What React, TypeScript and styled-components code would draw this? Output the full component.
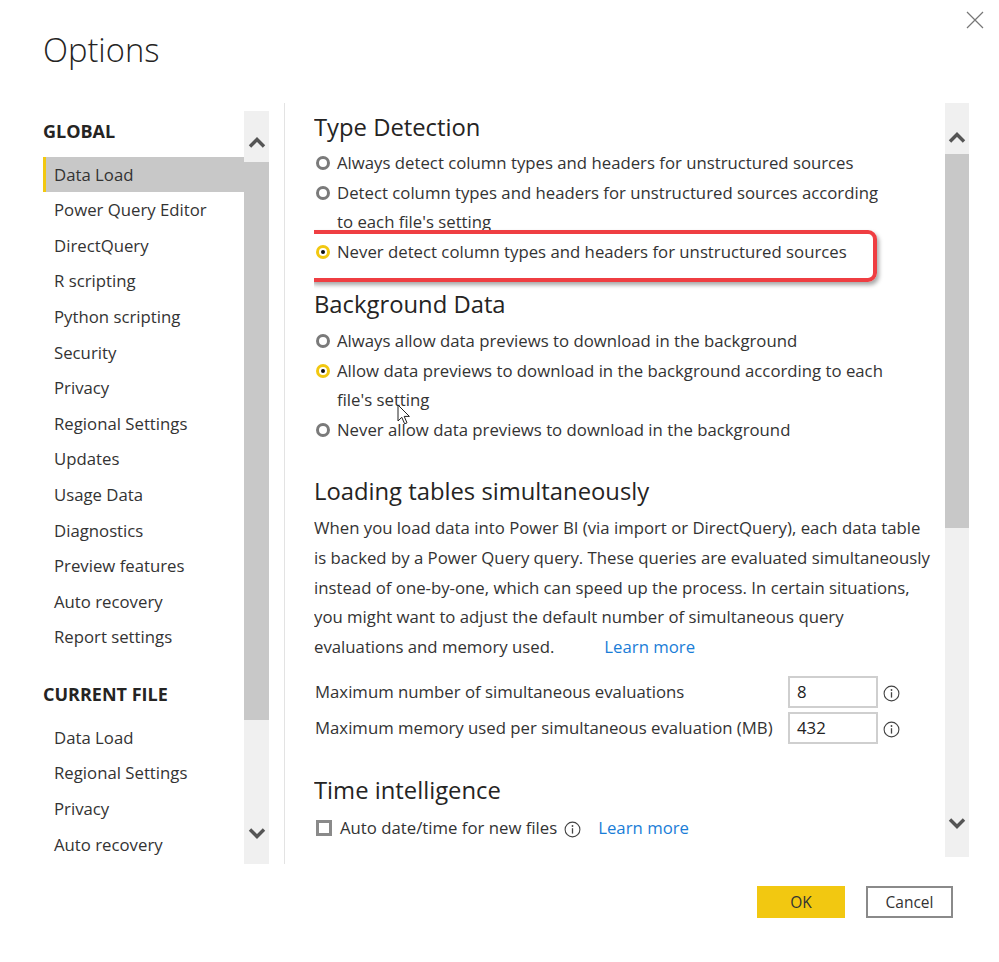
import React from "react";
import styled, { createGlobalStyle } from "styled-components";

const Global = createGlobalStyle`
  html, body { margin: 0; padding: 0; background: #fff; }
  body { font-family: "Open Sans", "Noto Sans", sans-serif; color: #333; }
  * { box-sizing: border-box; }
`;

const FONT_BODY = "16.75px";

const Dialog = styled.div`
  width: 999px;
  height: 962px;
  display: flex;
  flex-direction: column;
  background: #fff;
  position: relative;
  overflow: hidden;
`;

const Header = styled.header`
  height: 103px;
  display: flex;
  justify-content: space-between;
  align-items: flex-start;
  padding-left: 43px;
`;

const Title = styled.h1`
  margin: 28px 0 0;
  font-size: 32.7px;
  font-weight: 300;
  line-height: 44px;
  color: #252423;
`;

const CloseButton = styled.button`
  margin: 11px 15px 0 0;
  width: 18px;
  height: 18px;
  padding: 0;
  border: none;
  background: transparent;
  display: flex;
  align-items: center;
  justify-content: center;
`;

const Body = styled.div`
  height: 761px;
  display: flex;
  flex-direction: row;
`;

const Sidebar = styled.nav`
  margin-left: 43px;
  padding-top: 8px;
  display: flex;
  flex-direction: row;
`;

const NavList = styled.div`
  width: 201px;
  display: flex;
  flex-direction: column;
`;

const NavHeading = styled.div<{ $first?: boolean }>`
  font-size: 18px;
  font-weight: 700;
  line-height: 40px;
  margin-top: ${(p) => (p.$first ? "0" : "19.25px")};
  margin-bottom: 5.5px;
  color: #252423;
  white-space: nowrap;
`;

const NavItem = styled.div<{ $active?: boolean }>`
  height: 35.62px;
  line-height: 35.62px;
  font-size: ${FONT_BODY};
  padding-left: 8px;
  border-left: 3px solid ${(p) => (p.$active ? "#f2c811" : "transparent")};
  background: ${(p) => (p.$active ? "#c8c8c8" : "transparent")};
  color: #333;
  white-space: nowrap;
`;

const ScrollBar = styled.div<{ $w: number; $h?: number }>`
  width: ${(p) => p.$w}px;
  height: ${(p) => (p.$h ? `${p.$h}px` : "auto")};
  background: #f0f0f0;
  display: flex;
  flex-direction: column;
`;

const ArrowCell = styled.div<{ $padTop?: number; $padBottom?: number }>`
  height: 51px;
  display: flex;
  align-items: center;
  justify-content: center;
  padding-top: ${(p) => p.$padTop ?? 0}px;
  padding-bottom: ${(p) => p.$padBottom ?? 0}px;
  flex-shrink: 0;
`;

const Thumb = styled.div<{ $h: number }>`
  height: ${(p) => p.$h}px;
  background: #c8c8c8;
  flex-shrink: 0;
`;

const Track = styled.div`
  flex: 1;
`;

const Divider = styled.div`
  margin-left: 15px;
  width: 1px;
  background: #e3e3e3;
`;

const ContentPane = styled.main`
  margin-left: 29px;
  width: 631px;
  height: 754px;
  overflow: hidden;
  display: flex;
  flex-direction: column;
`;

const SectionTitle = styled.h2<{ $mt: number; $mb: number }>`
  margin: ${(p) => p.$mt}px 0 ${(p) => p.$mb}px;
  font-size: 23.8px;
  font-weight: 400;
  line-height: 36px;
  color: #252423;
  white-space: nowrap;
`;

const OptionRow = styled.div`
  position: relative;
  display: flex;
  align-items: flex-start;
  font-size: ${FONT_BODY};
  line-height: 29.6px;
  color: #333;
  white-space: nowrap;
`;

const Radio = styled.span<{ $checked?: boolean }>`
  flex-shrink: 0;
  width: 14px;
  height: 14px;
  margin: 7.8px 7px 0 2px;
  border-radius: 50%;
  border: 3px solid ${(p) => (p.$checked ? "#f2c811" : "#7a7a7a")};
  display: flex;
  align-items: center;
  justify-content: center;
  &::after {
    content: "";
    width: 4px;
    height: 4px;
    border-radius: 50%;
    background: ${(p) => (p.$checked ? "#111" : "transparent")};
  }
`;

const Highlight = styled.div`
  position: absolute;
  top: -7px;
  bottom: -15px;
  left: -8px;
  right: 68px;
  border: 4px solid #ef3e42;
  border-radius: 9px;
  box-shadow: 2px 3px 4px rgba(0, 0, 0, 0.35);
  pointer-events: none;
`;

const Paragraph = styled.p`
  margin: 0;
  font-size: ${FONT_BODY};
  line-height: 29.75px;
  color: #333;
  white-space: nowrap;
`;

const Link = styled.a<{ $ml?: number }>`
  color: #1a7dd7;
  text-decoration: none;
  margin-left: ${(p) => p.$ml ?? 0}px;
`;

const SettingRows = styled.div`
  margin-top: 14px;
  display: flex;
  flex-direction: column;
  gap: 4px;
`;

const SettingRow = styled.div`
  display: flex;
  align-items: center;
  height: 32px;
`;

const SettingLabel = styled.span`
  width: 474px;
  padding-left: 1px;
  font-size: ${FONT_BODY};
  color: #333;
  white-space: nowrap;
`;

const NumberInput = styled.div`
  width: 90px;
  height: 32px;
  border: 2px solid #cfcfcf;
  padding-left: 7px;
  font-size: ${FONT_BODY};
  line-height: 28px;
  color: #222;
`;

const InfoWrap = styled.span<{ $ml: number; $mt?: number }>`
  display: inline-flex;
  margin-left: ${(p) => p.$ml}px;
  margin-top: ${(p) => p.$mt ?? 0}px;
`;

const CheckRow = styled.div`
  display: flex;
  align-items: center;
  height: 30px;
  font-size: ${FONT_BODY};
  color: #333;
  white-space: nowrap;
`;

const CheckBox = styled.span`
  width: 16px;
  height: 16px;
  margin: 0 8px 0 2px;
  border: 3px solid #8a8a8a;
  flex-shrink: 0;
`;

const Footer = styled.footer`
  margin-top: 22px;
  padding-right: 46px;
  display: flex;
  justify-content: flex-end;
  gap: 21px;
`;

const Button = styled.button<{ $primary?: boolean }>`
  width: ${(p) => (p.$primary ? 88 : 87)}px;
  height: 32px;
  font-family: inherit;
  font-size: 15.5px;
  color: #333;
  background: ${(p) => (p.$primary ? "#f2c811" : "#fff")};
  border: ${(p) => (p.$primary ? "none" : "2px solid #8a8a8a")};
  padding: 0;
`;

const Cursor = styled.svg`
  position: absolute;
  left: 397px;
  top: 404px;
`;

const Chevron = ({ up }: { up?: boolean }) => (
  <svg width="18" height="11" viewBox="0 0 18 11">
    <path
      d={up ? "M2 9.5 L9 2.5 L16 9.5" : "M2 1.5 L9 8.5 L16 1.5"}
      fill="none"
      stroke="#555"
      strokeWidth="3.4"
    />
  </svg>
);

const Info = () => (
  <svg width="17" height="17" viewBox="0 0 17 17">
    <circle cx="8.5" cy="8.5" r="7.4" fill="none" stroke="#444" strokeWidth="1.1" />
    <circle cx="8.5" cy="5" r="0.9" fill="#444" />
    <path d="M8.5 7.2 V12.6" stroke="#444" strokeWidth="1.3" />
  </svg>
);

const globalItems = [
  "Data Load",
  "Power Query Editor",
  "DirectQuery",
  "R scripting",
  "Python scripting",
  "Security",
  "Privacy",
  "Regional Settings",
  "Updates",
  "Usage Data",
  "Diagnostics",
  "Preview features",
  "Auto recovery",
  "Report settings",
];

const fileItems = ["Data Load", "Regional Settings", "Privacy", "Auto recovery"];

export default function App() {
  return (
    <Dialog>
      <Global />
      <Header>
        <Title>Options</Title>
        <CloseButton aria-label="Close">
          <svg width="18" height="18" viewBox="0 0 18 18">
            <path d="M1 1 L17 17 M17 1 L1 17" stroke="#777" strokeWidth="1.2" />
          </svg>
        </CloseButton>
      </Header>
      <Body>
        <Sidebar>
          <NavList>
            <NavHeading $first>GLOBAL</NavHeading>
            {globalItems.map((t, i) => (
              <NavItem key={t} $active={i === 0}>
                {t}
              </NavItem>
            ))}
            <NavHeading>CURRENT FILE</NavHeading>
            {fileItems.map((t) => (
              <NavItem key={t}>{t}</NavItem>
            ))}
          </NavList>
          <ScrollBar $w={25}>
            <ArrowCell $padTop={12}>
              <Chevron up />
            </ArrowCell>
            <Thumb $h={558} />
            <Track />
            <ArrowCell $padBottom={10}>
              <Chevron />
            </ArrowCell>
          </ScrollBar>
        </Sidebar>
        <Divider />
        <ContentPane>
          <SectionTitle $mt={6} $mb={3.2}>
            Type Detection
          </SectionTitle>
          <OptionRow>
            <Radio />
            <span>Always detect column types and headers for unstructured sources</span>
          </OptionRow>
          <OptionRow>
            <Radio />
            <span>
              Detect column types and headers for unstructured sources according
              <br />
              to each file's setting
            </span>
          </OptionRow>
          <OptionRow>
            <Radio $checked />
            <span>Never detect column types and headers for unstructured sources</span>
            <Highlight />
          </OptionRow>

          <SectionTitle $mt={19.4} $mb={4.2}>
            Background Data
          </SectionTitle>
          <OptionRow>
            <Radio />
            <span>Always allow data previews to download in the background</span>
          </OptionRow>
          <OptionRow>
            <Radio $checked />
            <span>
              Allow data previews to download in the background according to each
              <br />
              file's setting
            </span>
          </OptionRow>
          <OptionRow>
            <Radio />
            <span>Never allow data previews to download in the background</span>
          </OptionRow>

          <SectionTitle $mt={28.4} $mb={4.1}>
            Loading tables simultaneously
          </SectionTitle>
          <Paragraph>
            When you load data into Power BI (via import or DirectQuery), each data table
            <br />
            is backed by a Power Query query. These queries are evaluated simultaneously
            <br />
            instead of one-by-one, which can speed up the process. In certain situations,
            <br />
            you might want to adjust the default number of simultaneous query
            <br />
            evaluations and memory used.
            <Link href="#" $ml={50}>
              Learn more
            </Link>
          </Paragraph>
          <SettingRows>
            <SettingRow>
              <SettingLabel>Maximum number of simultaneous evaluations</SettingLabel>
              <NumberInput>8</NumberInput>
              <InfoWrap $ml={5} $mt={4}>
                <Info />
              </InfoWrap>
            </SettingRow>
            <SettingRow>
              <SettingLabel>Maximum memory used per simultaneous evaluation (MB)</SettingLabel>
              <NumberInput>432</NumberInput>
              <InfoWrap $ml={5} $mt={4}>
                <Info />
              </InfoWrap>
            </SettingRow>
          </SettingRows>

          <SectionTitle $mt={28} $mb={5}>
            Time intelligence
          </SectionTitle>
          <CheckRow>
            <CheckBox />
            <span>Auto date/time for new files</span>
            <InfoWrap $ml={7} $mt={3}>
              <Info />
            </InfoWrap>
            <Link href="#" $ml={17}>
              Learn more
            </Link>
          </CheckRow>
        </ContentPane>
        <ScrollBar $w={24} $h={754}>
          <ArrowCell $padTop={18}>
            <Chevron up />
          </ArrowCell>
          <Thumb $h={374} />
          <Track />
          <ArrowCell $padBottom={16}>
            <Chevron />
          </ArrowCell>
        </ScrollBar>
      </Body>
      <Footer>
        <Button $primary>OK</Button>
        <Button>Cancel</Button>
      </Footer>
      <Cursor width="14" height="22" viewBox="0 0 14 22">
        <path
          d="M1 1 L1 17 L4.8 13.3 L7.6 19.8 L10 18.8 L7.2 12.4 L12.4 12.4 Z"
          fill="#fff"
          stroke="#222"
          strokeWidth="1"
          strokeLinejoin="round"
        />
      </Cursor>
    </Dialog>
  );
}
